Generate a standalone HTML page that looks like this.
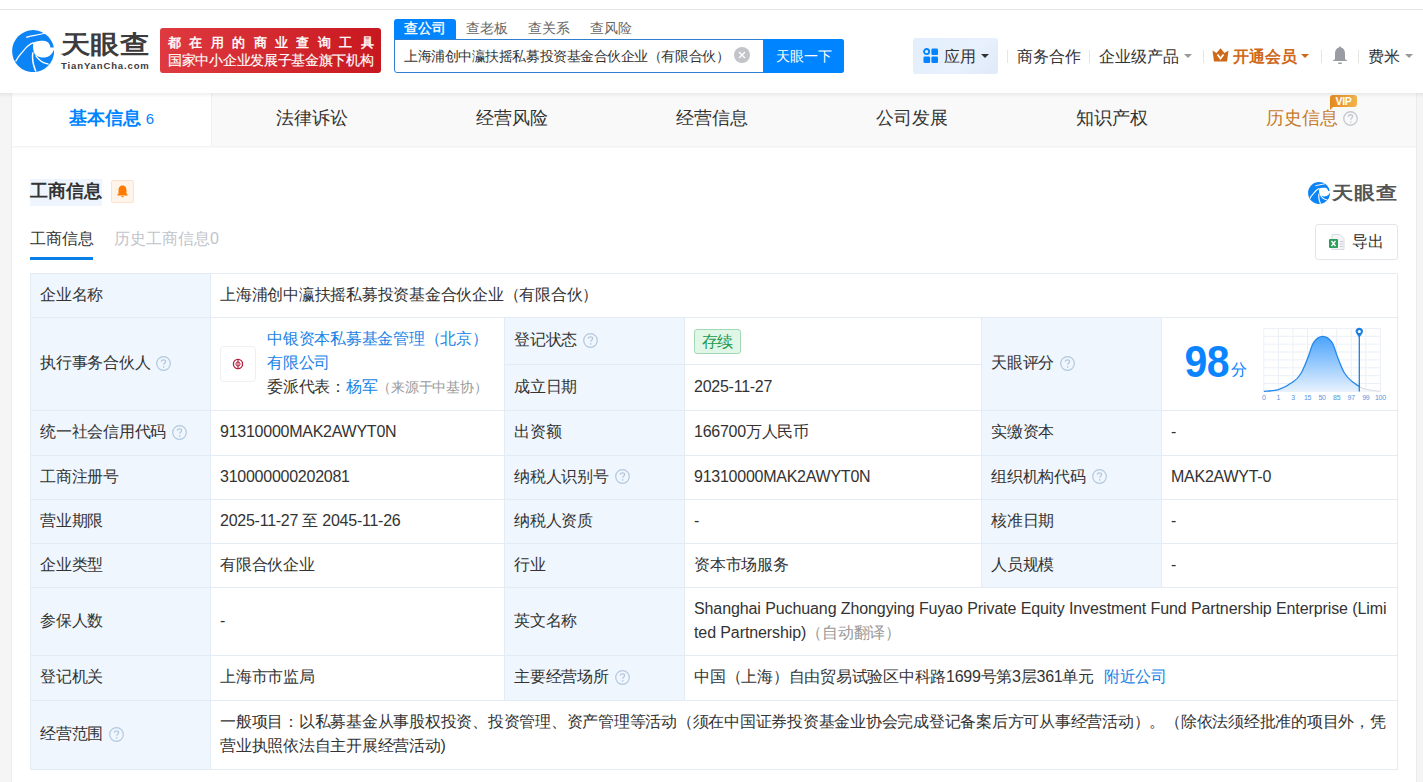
<!DOCTYPE html>
<html><head><meta charset="utf-8">
<style>
*{margin:0;padding:0;box-sizing:border-box}
html,body{width:1423px;height:782px;overflow:hidden}
body{background:#f5f5f5;font-family:"Liberation Sans",sans-serif;color:#333;position:relative}
.a{position:absolute;white-space:nowrap}
#top{position:absolute;left:0;top:0;width:1423px;height:10px;background:#fff;border-bottom:1px solid #e6e6e6}
#hdr{position:absolute;left:0;top:10px;width:1423px;height:83px;background:#fff;z-index:2}
#shd{position:absolute;left:0;top:93px;width:1423px;height:5px;background:linear-gradient(rgba(0,0,0,.06),rgba(0,0,0,0));z-index:3}
#card{position:absolute;left:11px;top:93px;width:1406px;height:700px;background:#fff;border-left:1px solid #ebebeb;border-right:1px solid #ebebeb}
#tabs{position:absolute;left:0;top:0;width:1404px;height:53px;background:#f9f9f9}
.tab{position:absolute;top:0;height:53px;line-height:50px;text-align:center;font-size:18px;color:#333;width:200px}
.tab.on{background:#fff;color:#0084ff;font-weight:bold}
.cell{position:absolute;border-right:1px solid #e3ecf5;border-bottom:1px solid #e3ecf5;padding-bottom:2px;font-size:16px;letter-spacing:-0.25px;color:#333;line-height:24px;display:flex;align-items:center;padding-left:9px}
.lb{background:#eff6fd}
.q{display:inline-block;width:15px;height:15px;margin-left:6px;vertical-align:middle;position:relative;top:0px}
.lnk{color:#1a83e6}
</style></head><body>
<div id="top"></div>
<div id="shd"></div>
<div id="hdr">
  <!-- logo -->
  <svg class="a" style="left:12px;top:20px" width="42" height="42" viewBox="4 4 42 42">
    <circle cx="25.1" cy="25.1" r="21" fill="#0d84f6"/>
    <path d="M25.24 16.7 C27 15.6 29 15 31.4 14.94 C33.5 14.8 35.5 14.8 37.3 15.06 C39 15.6 40.2 16.3 40.8 17.2 C41.6 18.2 42.1 19 42.2 19.9 L42.35 21.4 L46.9 21.4 L46.9 23.6 L45.8 23.9 C45.2 25.5 44.4 27 43.2 28.2 C42 29.5 40.6 30.4 39.06 30.9 C37.4 31.4 35.6 31.6 33.76 31.5 C32.2 31.3 30.8 30.9 29.6 30.35 C28.4 29.7 27.4 28.9 26.7 27.9 C26 26.8 25.6 25.6 25.4 24.35 C25.1 22.8 25 21.2 25.1 19.6 Z" fill="#fff"/>
    <path d="M18.2 11.4 C21 10.3 24 9.6 26.7 9.35 C30 9 33.5 8 36.9 7.2" stroke="#fff" stroke-width="1.15" fill="none"/>
    <path d="M7.6 35.5 C9.5 31.8 11.5 29 13.8 26.7 C15.6 24.6 17.6 22 19.6 20.2 C21.5 18.6 23.3 17.5 25.6 16.6" stroke="#fff" stroke-width="1.25" fill="none"/>
    <path d="M24.9 26.4 C24.5 28.5 24.4 30.5 24.6 32.6 C24.8 34.6 25 36.6 25.5 38.5 C26 40.6 26.8 42.7 27.9 45.6" stroke="#fff" stroke-width="1.5" fill="none"/>
    <path d="M27.6 29.4 C28.7 31 29.9 32.5 31.4 33.8 C32.7 35 34 36 35.5 36.7 C37 37.4 38.6 37.8 40.6 38.1" stroke="#fff" stroke-width="1.35" fill="none"/>
  </svg>
  <div class="a" style="left:61px;top:19px;font-size:30px;font-weight:bold;color:#3d3b3c;letter-spacing:-0.6px;transform:scaleY(0.85);transform-origin:0 0;line-height:36px">天眼查</div>
  <div class="a" style="left:61px;top:50px;font-size:9.5px;font-weight:bold;color:#3d3b3c;letter-spacing:0.88px;line-height:12px">TianYanCha.com</div>
  <!-- red banner -->
  <div class="a" style="left:160px;top:18px;width:221px;height:45px;border-radius:3px;background:linear-gradient(90deg,#de3a40,#c8181f)"></div>
  <div class="a" style="left:168px;top:25px;font-size:13px;font-weight:normal;-webkit-text-stroke:0.45px #fff;color:#fff;letter-spacing:8.4px;line-height:16px">都在用的商业查询工具</div>
  <div class="a" style="left:168px;top:42px;font-size:14px;-webkit-text-stroke:0.15px #fff;color:#fff;line-height:16px;letter-spacing:-0.3px">国家中小企业发展子基金旗下机构</div>
  <!-- search -->
  <div class="a" style="left:394px;top:9px;width:62px;height:21px;background:#0084ff;border-radius:3px 3px 0 0"></div>
  <div class="a" style="left:404px;top:8px;font-size:14px;color:#fff;line-height:21px;-webkit-text-stroke:0.35px #fff">查公司</div>
  <div class="a" style="left:466px;top:8px;font-size:14px;color:#666;line-height:21px">查老板</div>
  <div class="a" style="left:528px;top:8px;font-size:14px;color:#666;line-height:21px">查关系</div>
  <div class="a" style="left:590px;top:8px;font-size:14px;color:#666;line-height:21px">查风险</div>
  <div class="a" style="left:394px;top:29px;width:450px;height:34px;border:1px solid #2f7fd0;border-radius:0 3px 3px 3px;background:#fff"></div>
  <div class="a" style="left:404px;top:29px;font-size:14px;letter-spacing:-0.45px;color:#333;line-height:34px">上海浦创中瀛扶摇私募投资基金合伙企业（有限合伙）</div>
  <div class="a" style="left:734px;top:37px;width:16px;height:16px;border-radius:50%;background:#c2c4c9"></div>
  <svg class="a" style="left:734px;top:37px" width="16" height="16"><path d="M5 5 L11 11 M11 5 L5 11" stroke="#fff" stroke-width="1.4"/></svg>
  <div class="a" style="left:763px;top:29px;width:81px;height:34px;background:#0084ff;border-radius:0 3px 3px 0;color:#fff;font-size:14px;line-height:34px;text-align:center;padding-left:1px">天眼一下</div>
  <!-- right nav -->
  <div class="a" style="left:913px;top:28px;width:85px;height:36px;border-radius:3px;background:linear-gradient(135deg,#e2eefc,#e8f1fd 60%,#dfe9f8)"></div>
  <svg class="a" style="left:923px;top:38px" width="16" height="16">
    <circle cx="3.6" cy="3.6" r="2.6" fill="none" stroke="#0084ff" stroke-width="1.8"/>
    <rect x="8.4" y="0.5" width="6.6" height="6.6" rx="1.3" fill="#0084ff"/>
    <rect x="0.5" y="8.4" width="6.6" height="6.6" rx="1.3" fill="#0084ff"/>
    <rect x="8.4" y="8.4" width="6.6" height="6.6" rx="1.3" fill="#0084ff"/>
  </svg>
  <div class="a" style="left:944px;top:29px;font-size:16px;line-height:36px;color:#333">应用</div>
  <div class="a" style="left:981px;top:44px;width:0;height:0;border-left:4px solid transparent;border-right:4px solid transparent;border-top:4px solid #333"></div>
  <div class="a" style="left:1007px;top:40px;width:1px;height:13px;background:#e5e5e5"></div>
  <div class="a" style="left:1017px;top:29px;font-size:16px;line-height:36px;color:#333">商务合作</div>
  <div class="a" style="left:1089px;top:40px;width:1px;height:13px;background:#e5e5e5"></div>
  <div class="a" style="left:1099px;top:29px;font-size:16px;line-height:36px;color:#333">企业级产品</div>
  <div class="a" style="left:1184px;top:44px;width:0;height:0;border-left:4px solid transparent;border-right:4px solid transparent;border-top:4px solid #999"></div>
  <div class="a" style="left:1203px;top:40px;width:1px;height:13px;background:#e5e5e5"></div>
  <svg class="a" style="left:1212px;top:38px" width="17" height="14" viewBox="0 0 17 14">
    <path d="M0.5 2.5 L4.5 5 L8.5 0.3 L12.5 5 L16.5 2.5 L15 13.5 L2 13.5 Z" fill="#cf6818"/>
    <path d="M5.5 6.5 L8.5 10.5 L11.5 6.5" stroke="#fff" stroke-width="1.8" fill="none"/>
  </svg>
  <div class="a" style="left:1233px;top:29px;font-size:16px;line-height:36px;color:#cf6818;font-weight:bold">开通会员</div>
  <div class="a" style="left:1301px;top:44px;width:0;height:0;border-left:4px solid transparent;border-right:4px solid transparent;border-top:4px solid #cf6818"></div>
  <div class="a" style="left:1321px;top:40px;width:1px;height:13px;background:#e5e5e5"></div>
  <svg class="a" style="left:1332px;top:36px" width="16" height="19" viewBox="0 0 16 19">
    <path d="M8 0.5 C8.8 0.5 9 1 9 1.6 C11.8 2.3 13 4.8 13 7.5 L13 13 L15.5 15 L0.5 15 L3 13 L3 7.5 C3 4.8 4.2 2.3 7 1.6 C7 1 7.2 0.5 8 0.5 Z" fill="#9a9ca3"/>
    <rect x="6" y="16.5" width="4" height="1.6" rx="0.8" fill="#9a9ca3"/>
  </svg>
  <div class="a" style="left:1358px;top:40px;width:1px;height:13px;background:#e5e5e5"></div>
  <div class="a" style="left:1368px;top:29px;font-size:16px;line-height:36px;color:#333">费米</div>
  <div class="a" style="left:1405px;top:44px;width:0;height:0;border-left:4px solid transparent;border-right:4px solid transparent;border-top:4px solid #999"></div>
</div>

<div id="card">
  <div id="tabs">
    <div class="tab on" style="left:0;width:200px;border-right:1px solid #f0f0f0">基本信息 <span style="font-weight:normal;font-size:15px">6</span></div>
    <div class="a" style="left:0;top:53px;width:1404px;height:2px;background:linear-gradient(#f3f3f3,#fafafa)"></div>
    <div class="tab" style="left:200px">法律诉讼</div>
    <div class="tab" style="left:400px">经营风险</div>
    <div class="tab" style="left:600px">经营信息</div>
    <div class="tab" style="left:800px">公司发展</div>
    <div class="tab" style="left:1000px">知识产权</div>
    <div class="tab" style="left:1200px;color:#c77a2c">历史信息<svg class="q" style="margin-left:5px;top:-1px" width="15" height="15" viewBox="0 0 14 14"><circle cx="7" cy="7" r="6.3" fill="none" stroke="#c5c8ce" stroke-width="1.2"/><path d="M5 5.4 C5 4.2 5.9 3.5 7 3.5 C8.1 3.5 9 4.2 9 5.2 C9 6.4 7.2 6.6 7.2 8.2" fill="none" stroke="#c5c8ce" stroke-width="1.2"/><circle cx="7.2" cy="10.2" r="0.75" fill="#c5c8ce"/></svg></div>
    <div class="a" style="left:1318px;top:2px;width:27px;height:12px;background:linear-gradient(90deg,#e28a1c,#f2b34e);border-radius:3px 3px 3px 0;color:#fff;font-size:10.5px;font-weight:bold;line-height:12px;text-align:center;letter-spacing:-0.3px">VIP</div><div class="a" style="left:1318px;top:13px;width:0;height:0;border-top:4px solid #e28a1c;border-right:4px solid transparent"></div>
  </div>
</div>

<!-- section heading -->
<div class="a" style="left:30px;top:179px;width:72px;height:27px;background:#eef5fe"></div>
<div class="a" style="left:30px;top:178px;font-size:18px;font-weight:bold;color:#333;line-height:27px">工商信息</div>
<div class="a" style="left:111px;top:180px;width:23px;height:23px;background:#fff4e9;border:1px solid #fde3cf;border-radius:2px"></div>
<svg class="a" style="left:116px;top:185px" width="13" height="13" viewBox="0 0 13 13"><path d="M6.5 0.5 C9.5 0.5 10.5 3 10.5 5.5 L10.5 8.5 L12 10.5 L1 10.5 L2.5 8.5 L2.5 5.5 C2.5 3 3.5 0.5 6.5 0.5 Z M5 11.2 L8 11.2 C8 12.5 5 12.5 5 11.2Z" fill="#ff7a00"/></svg>

<!-- right logo -->
<svg class="a" style="left:1308px;top:182px" width="22" height="22" viewBox="4 4 42 42">
  <circle cx="25.1" cy="25.1" r="21" fill="#0d84f6"/>
    <path d="M25.24 16.7 C27 15.6 29 15 31.4 14.94 C33.5 14.8 35.5 14.8 37.3 15.06 C39 15.6 40.2 16.3 40.8 17.2 C41.6 18.2 42.1 19 42.2 19.9 L42.35 21.4 L46.9 21.4 L46.9 23.6 L45.8 23.9 C45.2 25.5 44.4 27 43.2 28.2 C42 29.5 40.6 30.4 39.06 30.9 C37.4 31.4 35.6 31.6 33.76 31.5 C32.2 31.3 30.8 30.9 29.6 30.35 C28.4 29.7 27.4 28.9 26.7 27.9 C26 26.8 25.6 25.6 25.4 24.35 C25.1 22.8 25 21.2 25.1 19.6 Z" fill="#fff"/>
    <path d="M18.2 11.4 C21 10.3 24 9.6 26.7 9.35 C30 9 33.5 8 36.9 7.2" stroke="#fff" stroke-width="1.9" fill="none"/>
    <path d="M7.6 35.5 C9.5 31.8 11.5 29 13.8 26.7 C15.6 24.6 17.6 22 19.6 20.2 C21.5 18.6 23.3 17.5 25.6 16.6" stroke="#fff" stroke-width="2" fill="none"/>
    <path d="M24.9 26.4 C24.5 28.5 24.4 30.5 24.6 32.6 C24.8 34.6 25 36.6 25.5 38.5 C26 40.6 26.8 42.7 27.9 45.6" stroke="#fff" stroke-width="2.2" fill="none"/>
    <path d="M27.6 29.4 C28.7 31 29.9 32.5 31.4 33.8 C32.7 35 34 36 35.5 36.7 C37 37.4 38.6 37.8 40.6 38.1" stroke="#fff" stroke-width="2" fill="none"/>
</svg>
<div class="a" style="left:1332px;top:181px;font-size:21.5px;font-weight:bold;color:#555;line-height:28px;transform:scaleY(0.85);transform-origin:0 0">天眼查</div>

<!-- subtabs -->
<div class="a" style="left:30px;top:227px;font-size:16px;color:#333;line-height:24px">工商信息</div>
<div class="a" style="left:30px;top:257px;width:63px;height:3px;background:#0a7fe6"></div>
<div class="a" style="left:114px;top:227px;font-size:16px;color:#c0c4cc;line-height:24px">历史工商信息0</div>

<!-- export -->
<div class="a" style="left:1315px;top:224px;width:83px;height:36px;border:1px solid #e3e6ea;border-radius:3px;background:#fff"></div>
<svg class="a" style="left:1329px;top:234px" width="16" height="16" viewBox="0 0 16 16">
  <path d="M3 0.5 L11 0.5 L15 4.5 L15 15.5 L3 15.5 Z" fill="#f4f5f7" stroke="#d8dbe0" stroke-width="1"/>
  <rect x="11" y="7" width="3" height="1" fill="#c8ccd2"/><rect x="11" y="9.5" width="3" height="1" fill="#c8ccd2"/><rect x="11" y="12" width="3" height="1" fill="#c8ccd2"/>
  <rect x="0" y="5" width="9" height="9" rx="1" fill="#2e9f5b"/>
  <path d="M2.5 7 L6.5 12 M6.5 7 L2.5 12" stroke="#fff" stroke-width="1.3"/>
</svg>
<div class="a" style="left:1352px;top:230px;font-size:16px;color:#333;line-height:24px">导出</div>

<!-- table -->
<div id="tbl" class="a" style="left:30px;top:273px;width:1368px;height:497px;border-left:1px solid #e3ecf5;border-top:1px solid #e3ecf5"></div>
<!-- TABLE START -->
<div class="cell lb" style="left:31px;top:274px;width:180px;height:44px;">企业名称</div>
<div class="cell" style="left:211px;top:274px;width:1187px;height:44px;">上海浦创中瀛扶摇私募投资基金合伙企业（有限合伙）</div>
<div class="cell lb" style="left:31px;top:318px;width:180px;height:93px;">执行事务合伙人<svg class="q" width="15" height="15" viewBox="0 0 15 15"><circle cx="7.5" cy="7.5" r="6.8" fill="none" stroke="#b3c8de" stroke-width="1.2"/><path d="M5.4 5.8 C5.4 4.5 6.3 3.8 7.5 3.8 C8.7 3.8 9.6 4.5 9.6 5.6 C9.6 6.9 7.7 7.1 7.7 8.8" fill="none" stroke="#b3c8de" stroke-width="1.25"/><circle cx="7.7" cy="10.9" r="0.8" fill="#b3c8de"/></svg></div>
<div class="cell" style="left:211px;top:318px;width:294px;height:93px;"><div style="position:absolute;left:9px;top:28px;width:36px;height:36px;border:1px solid #efefef;border-radius:4px;background:#fff"><svg style="position:absolute;left:11px;top:11px" width="12" height="12" viewBox="0 0 12 12"><circle cx="6" cy="6" r="4.6" fill="none" stroke="#b11f3c" stroke-width="1.3"/><circle cx="6" cy="6" r="2.1" fill="none" stroke="#b11f3c" stroke-width="1"/><rect x="5.5" y="1.5" width="1" height="9" fill="#b11f3c"/></svg></div>
<div style="position:absolute;left:56px;top:9px;line-height:24px;white-space:nowrap"><span class="lnk">中银资本私募基金管理（北京）<br>有限公司</span><br>委派代表：<span class="lnk">杨军</span><span style="color:#999;font-size:13.5px">（来源于中基协）</span></div></div>
<div class="cell lb" style="left:505px;top:318px;width:180px;height:47px;">登记状态<svg class="q" width="15" height="15" viewBox="0 0 15 15"><circle cx="7.5" cy="7.5" r="6.8" fill="none" stroke="#b3c8de" stroke-width="1.2"/><path d="M5.4 5.8 C5.4 4.5 6.3 3.8 7.5 3.8 C8.7 3.8 9.6 4.5 9.6 5.6 C9.6 6.9 7.7 7.1 7.7 8.8" fill="none" stroke="#b3c8de" stroke-width="1.25"/><circle cx="7.7" cy="10.9" r="0.8" fill="#b3c8de"/></svg></div>
<div class="cell" style="left:685px;top:318px;width:297px;height:47px;"><span style="display:inline-block;height:25px;line-height:23px;padding:0 6.5px;border:1px solid #a3d8b5;background:#e0f7e8;color:#1f9a4f;border-radius:3px;position:relative;top:1px">存续</span></div>
<div class="cell lb" style="left:505px;top:365px;width:180px;height:46px;">成立日期</div>
<div class="cell" style="left:685px;top:365px;width:297px;height:46px;">2025-11-27</div>
<div class="cell lb" style="left:982px;top:318px;width:180px;height:93px;">天眼评分<svg class="q" width="15" height="15" viewBox="0 0 15 15"><circle cx="7.5" cy="7.5" r="6.8" fill="none" stroke="#b3c8de" stroke-width="1.2"/><path d="M5.4 5.8 C5.4 4.5 6.3 3.8 7.5 3.8 C8.7 3.8 9.6 4.5 9.6 5.6 C9.6 6.9 7.7 7.1 7.7 8.8" fill="none" stroke="#b3c8de" stroke-width="1.25"/><circle cx="7.7" cy="10.9" r="0.8" fill="#b3c8de"/></svg></div>
<div class="cell" style="left:1162px;top:318px;width:236px;height:93px;padding:0"><svg style="position:absolute;left:0;top:0" width="236" height="93" viewBox="0 0 236 93"><defs><linearGradient id="g1" x1="0" y1="0" x2="0" y2="1"><stop offset="0" stop-color="#4aa3fc"/><stop offset="1" stop-color="#e6f1fd"/></linearGradient></defs><path d="M101.84 10.4 L101.84 73.4 M116.41 10.4 L116.41 73.4 M130.98 10.4 L130.98 73.4 M145.55 10.4 L145.55 73.4 M160.12 10.4 L160.12 73.4 M174.69 10.4 L174.69 73.4 M189.26 10.4 L189.26 73.4 M203.83 10.4 L203.83 73.4 M218.40 10.4 L218.40 73.4 M101.84 10.40 L218.4 10.40 M101.84 18.28 L218.4 18.28 M101.84 26.15 L218.4 26.15 M101.84 34.03 L218.4 34.03 M101.84 41.90 L218.4 41.90 M101.84 49.78 L218.4 49.78 M101.84 57.65 L218.4 57.65 M101.84 65.53 L218.4 65.53 M101.84 73.40 L218.4 73.40" stroke="#ebf0f6" stroke-width="1" fill="none"/><path d="M101.84 73.30 C104.28 73.02 111.54 73.22 116.50 71.60 C121.46 69.98 127.81 66.37 131.60 63.60 C135.39 60.83 136.85 58.97 139.25 54.97 C141.65 50.97 143.90 44.72 145.97 39.60 C148.04 34.48 149.23 27.82 151.70 24.27 C154.17 20.72 157.76 18.30 160.80 18.30 C163.84 18.30 167.47 20.72 169.95 24.27 C172.43 27.82 173.62 34.48 175.70 39.60 C177.77 44.72 180.00 50.97 182.40 54.97 C184.80 58.97 187.62 61.36 190.10 63.60 C192.58 65.84 196.10 67.60 197.30 68.40 L197.3 73.4 L101.84 73.4 Z" fill="url(#g1)"/><path d="M197.30 68.40 C198.42 68.88 200.48 70.48 204.00 71.30 C207.52 72.12 216.00 72.97 218.40 73.30 L218.4 73.4 L197.3 73.4 Z" fill="#f5f7fa"/><path d="M101.84 73.30 C104.28 73.02 111.54 73.22 116.50 71.60 C121.46 69.98 127.81 66.37 131.60 63.60 C135.39 60.83 136.85 58.97 139.25 54.97 C141.65 50.97 143.90 44.72 145.97 39.60 C148.04 34.48 149.23 27.82 151.70 24.27 C154.17 20.72 157.76 18.30 160.80 18.30 C163.84 18.30 167.47 20.72 169.95 24.27 C172.43 27.82 173.62 34.48 175.70 39.60 C177.77 44.72 180.00 50.97 182.40 54.97 C184.80 58.97 187.62 61.36 190.10 63.60 C192.58 65.84 196.10 67.60 197.30 68.40" stroke="#2687ea" stroke-width="1.3" fill="none"/><path d="M197.30 68.40 C198.42 68.88 200.48 70.48 204.00 71.30 C207.52 72.12 216.00 72.97 218.40 73.30" stroke="#d9dde3" stroke-width="1.1" fill="none"/><line x1="197.3" y1="16" x2="197.3" y2="73.4" stroke="#1d7fe2" stroke-width="1.3"/><path d="M197.3 19.8 L194.20000000000002 15.2 A3.6 3.6 0 1 1 200.4 15.2 Z" fill="#1d7fe2"/><circle cx="197.3" cy="13.4" r="1.5" fill="#fff"/><text x="101.84" y="81.8" font-size="7" fill="#5596dc" text-anchor="middle" font-family="Liberation Sans, sans-serif">0</text><text x="116.41" y="81.8" font-size="7" fill="#5596dc" text-anchor="middle" font-family="Liberation Sans, sans-serif">1</text><text x="130.98" y="81.8" font-size="7" fill="#5596dc" text-anchor="middle" font-family="Liberation Sans, sans-serif">3</text><text x="145.55" y="81.8" font-size="7" fill="#5596dc" text-anchor="middle" font-family="Liberation Sans, sans-serif">15</text><text x="160.12" y="81.8" font-size="7" fill="#5596dc" text-anchor="middle" font-family="Liberation Sans, sans-serif">50</text><text x="174.69" y="81.8" font-size="7" fill="#5596dc" text-anchor="middle" font-family="Liberation Sans, sans-serif">85</text><text x="189.26" y="81.8" font-size="7" fill="#5596dc" text-anchor="middle" font-family="Liberation Sans, sans-serif">97</text><text x="203.83" y="81.8" font-size="7" fill="#5596dc" text-anchor="middle" font-family="Liberation Sans, sans-serif">99</text><text x="218.40" y="81.8" font-size="7" fill="#5596dc" text-anchor="middle" font-family="Liberation Sans, sans-serif">100</text><text x="22.5" y="59" font-size="41" font-weight="bold" fill="#0a84ff" font-family="Liberation Sans, sans-serif" letter-spacing="-0.5" transform="translate(0,59) scale(1,1.07) translate(0,-59)">98</text><text x="69" y="57" font-size="16" fill="#0a84ff" font-family="Liberation Sans, sans-serif">分</text></svg></div>
<div class="cell lb" style="left:31px;top:411px;width:180px;height:45px;">统一社会信用代码<svg class="q" width="15" height="15" viewBox="0 0 15 15"><circle cx="7.5" cy="7.5" r="6.8" fill="none" stroke="#b3c8de" stroke-width="1.2"/><path d="M5.4 5.8 C5.4 4.5 6.3 3.8 7.5 3.8 C8.7 3.8 9.6 4.5 9.6 5.6 C9.6 6.9 7.7 7.1 7.7 8.8" fill="none" stroke="#b3c8de" stroke-width="1.25"/><circle cx="7.7" cy="10.9" r="0.8" fill="#b3c8de"/></svg></div>
<div class="cell" style="left:211px;top:411px;width:294px;height:45px;">91310000MAK2AWYT0N</div>
<div class="cell lb" style="left:505px;top:411px;width:180px;height:45px;">出资额</div>
<div class="cell" style="left:685px;top:411px;width:297px;height:45px;">166700万人民币</div>
<div class="cell lb" style="left:982px;top:411px;width:180px;height:45px;">实缴资本</div>
<div class="cell" style="left:1162px;top:411px;width:236px;height:45px;">-</div>
<div class="cell lb" style="left:31px;top:456px;width:180px;height:44px;">工商注册号</div>
<div class="cell" style="left:211px;top:456px;width:294px;height:44px;">310000000202081</div>
<div class="cell lb" style="left:505px;top:456px;width:180px;height:44px;">纳税人识别号<svg class="q" width="15" height="15" viewBox="0 0 15 15"><circle cx="7.5" cy="7.5" r="6.8" fill="none" stroke="#b3c8de" stroke-width="1.2"/><path d="M5.4 5.8 C5.4 4.5 6.3 3.8 7.5 3.8 C8.7 3.8 9.6 4.5 9.6 5.6 C9.6 6.9 7.7 7.1 7.7 8.8" fill="none" stroke="#b3c8de" stroke-width="1.25"/><circle cx="7.7" cy="10.9" r="0.8" fill="#b3c8de"/></svg></div>
<div class="cell" style="left:685px;top:456px;width:297px;height:44px;">91310000MAK2AWYT0N</div>
<div class="cell lb" style="left:982px;top:456px;width:180px;height:44px;">组织机构代码<svg class="q" width="15" height="15" viewBox="0 0 15 15"><circle cx="7.5" cy="7.5" r="6.8" fill="none" stroke="#b3c8de" stroke-width="1.2"/><path d="M5.4 5.8 C5.4 4.5 6.3 3.8 7.5 3.8 C8.7 3.8 9.6 4.5 9.6 5.6 C9.6 6.9 7.7 7.1 7.7 8.8" fill="none" stroke="#b3c8de" stroke-width="1.25"/><circle cx="7.7" cy="10.9" r="0.8" fill="#b3c8de"/></svg></div>
<div class="cell" style="left:1162px;top:456px;width:236px;height:44px;">MAK2AWYT-0</div>
<div class="cell lb" style="left:31px;top:500px;width:180px;height:44px;">营业期限</div>
<div class="cell" style="left:211px;top:500px;width:294px;height:44px;">2025-11-27 至 2045-11-26</div>
<div class="cell lb" style="left:505px;top:500px;width:180px;height:44px;">纳税人资质</div>
<div class="cell" style="left:685px;top:500px;width:297px;height:44px;">-</div>
<div class="cell lb" style="left:982px;top:500px;width:180px;height:44px;">核准日期</div>
<div class="cell" style="left:1162px;top:500px;width:236px;height:44px;">-</div>
<div class="cell lb" style="left:31px;top:544px;width:180px;height:44px;">企业类型</div>
<div class="cell" style="left:211px;top:544px;width:294px;height:44px;">有限合伙企业</div>
<div class="cell lb" style="left:505px;top:544px;width:180px;height:44px;">行业</div>
<div class="cell" style="left:685px;top:544px;width:297px;height:44px;">资本市场服务</div>
<div class="cell lb" style="left:982px;top:544px;width:180px;height:44px;">人员规模</div>
<div class="cell" style="left:1162px;top:544px;width:236px;height:44px;">-</div>
<div class="cell lb" style="left:31px;top:588px;width:180px;height:68px;">参保人数</div>
<div class="cell" style="left:211px;top:588px;width:294px;height:68px;">-</div>
<div class="cell lb" style="left:505px;top:588px;width:180px;height:68px;">英文名称</div>
<div class="cell" style="left:685px;top:588px;width:713px;height:68px;"><div style="white-space:nowrap;letter-spacing:-0.1px">Shanghai Puchuang Zhongying Fuyao Private Equity Investment Fund Partnership Enterprise (Limi<br>ted Partnership)<span style="color:#999;letter-spacing:-0.25px">（自动翻译）</span></div></div>
<div class="cell lb" style="left:31px;top:656px;width:180px;height:45px;">登记机关</div>
<div class="cell" style="left:211px;top:656px;width:294px;height:45px;">上海市市监局</div>
<div class="cell lb" style="left:505px;top:656px;width:180px;height:45px;">主要经营场所<svg class="q" width="15" height="15" viewBox="0 0 15 15"><circle cx="7.5" cy="7.5" r="6.8" fill="none" stroke="#b3c8de" stroke-width="1.2"/><path d="M5.4 5.8 C5.4 4.5 6.3 3.8 7.5 3.8 C8.7 3.8 9.6 4.5 9.6 5.6 C9.6 6.9 7.7 7.1 7.7 8.8" fill="none" stroke="#b3c8de" stroke-width="1.25"/><circle cx="7.7" cy="10.9" r="0.8" fill="#b3c8de"/></svg></div>
<div class="cell" style="left:685px;top:656px;width:713px;height:45px;">中国（上海）自由贸易试验区中科路1699号第3层361单元<span class="lnk" style="margin-left:10px">附近公司</span></div>
<div class="cell lb" style="left:31px;top:701px;width:180px;height:69px;">经营范围<svg class="q" width="15" height="15" viewBox="0 0 15 15"><circle cx="7.5" cy="7.5" r="6.8" fill="none" stroke="#b3c8de" stroke-width="1.2"/><path d="M5.4 5.8 C5.4 4.5 6.3 3.8 7.5 3.8 C8.7 3.8 9.6 4.5 9.6 5.6 C9.6 6.9 7.7 7.1 7.7 8.8" fill="none" stroke="#b3c8de" stroke-width="1.25"/><circle cx="7.7" cy="10.9" r="0.8" fill="#b3c8de"/></svg></div>
<div class="cell" style="left:211px;top:701px;width:1187px;height:69px;"><div style="white-space:nowrap">一般项目：以私募基金从事股权投资、投资管理、资产管理等活动（须在中国证券投资基金业协会完成登记备案后方可从事经营活动）。（除依法须经批准的项目外，凭<br>营业执照依法自主开展经营活动)</div></div>
<!-- TABLE END -->
</body></html>
